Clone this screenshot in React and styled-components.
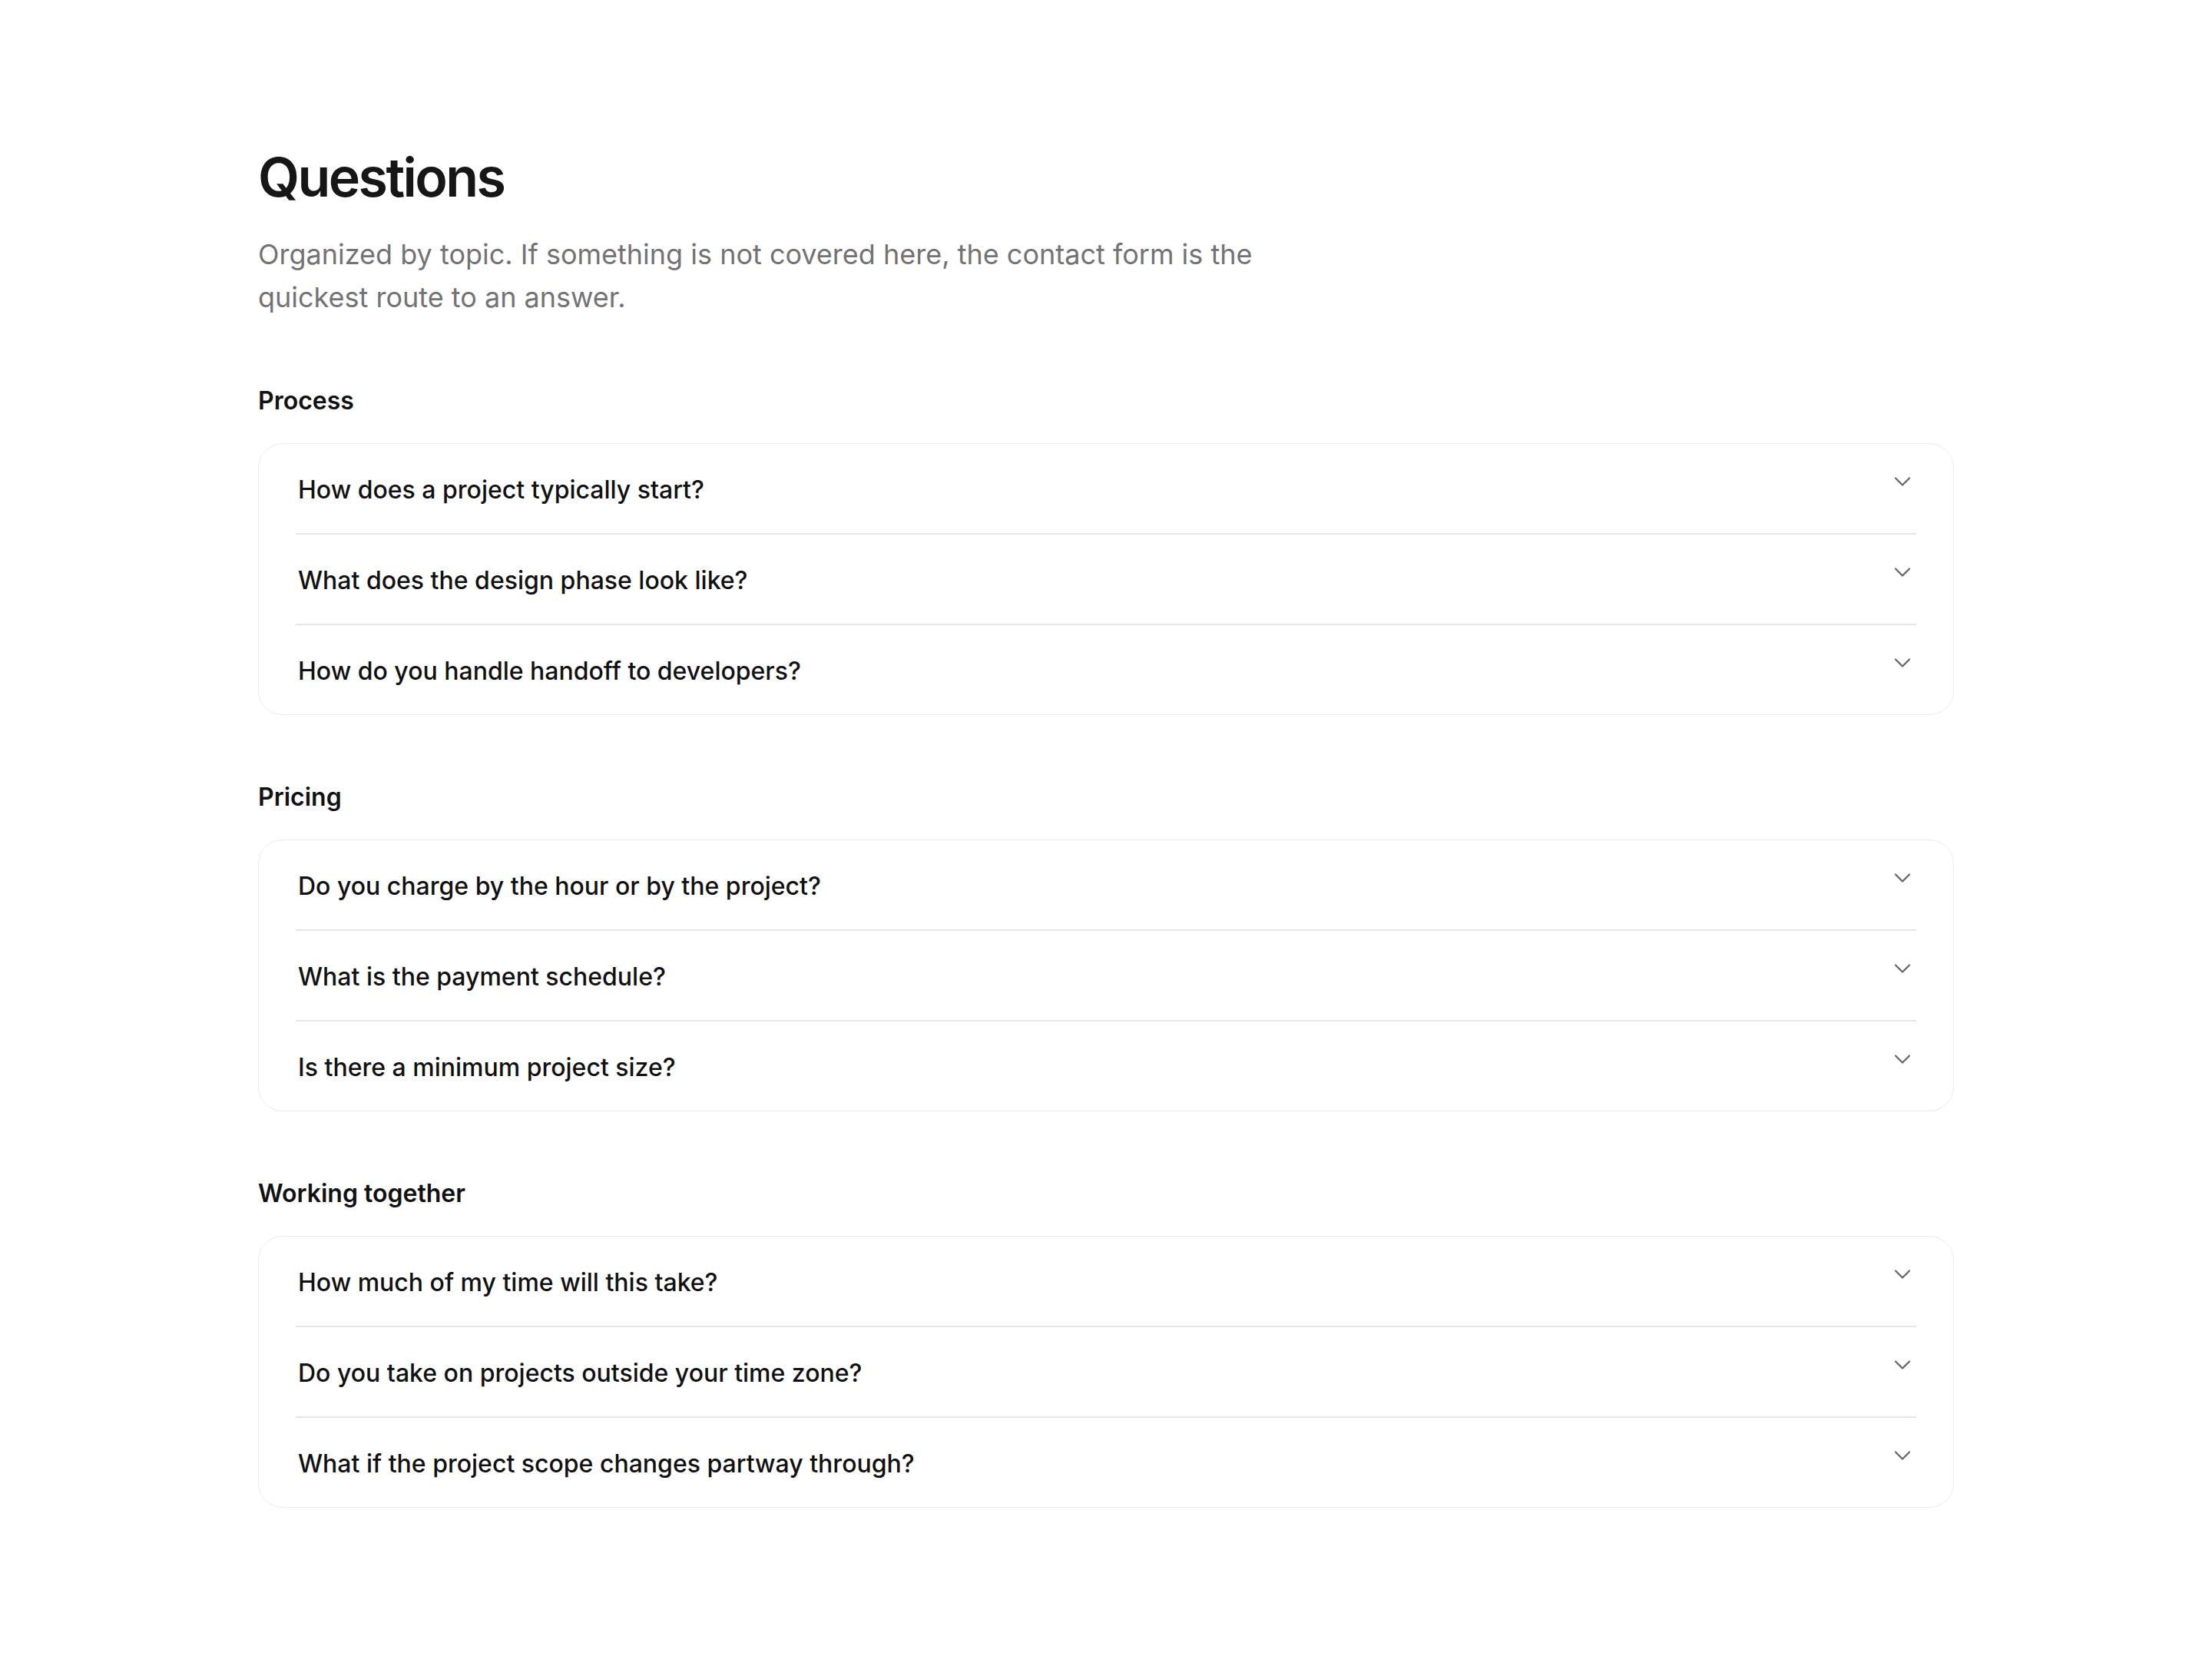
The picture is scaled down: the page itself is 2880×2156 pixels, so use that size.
import { ChevronDown } from "lucide-react"
import styled, { createGlobalStyle } from "styled-components"

const GlobalStyle = createGlobalStyle`
  html, body {
    margin: 0;
    padding: 0;
    background: #ffffff;
  }
  body {
    font-family: Inter, "Noto Sans", "Liberation Sans", sans-serif;
    color: #111111;
    -webkit-font-smoothing: antialiased;
  }
`

const Page = styled.main`
  max-width: 2208px;
  margin: 0 auto;
  padding: 191px 0 160px;
`

const Header = styled.header`
  display: flex;
  flex-direction: column;
  gap: 33px;
  margin-bottom: 81px;
`

const Title = styled.h1`
  margin: 0;
  font-size: 70px;
  line-height: 79px;
  font-weight: 600;
  letter-spacing: -0.037em;
  color: #161616;
`

const Subtitle = styled.p`
  margin: 0;
  max-width: 1420px;
  font-size: 36px;
  line-height: 56px;
  color: #737373;
`

const Sections = styled.div`
  display: flex;
  flex-direction: column;
  gap: 81px;
`

const Section = styled.section`
  display: flex;
  flex-direction: column;
  gap: 31px;
`

const SectionLabel = styled.h2`
  margin: 2px 0 0;
  font-size: 32px;
  line-height: 48px;
  font-weight: 600;
  color: #111111;
`

const Card = styled.div`
  border: 1px solid #ececec;
  border-radius: 32px;
  padding: 0 48px;
  background: #ffffff;
`

const Row = styled.button`
  display: flex;
  align-items: flex-start;
  justify-content: space-between;
  width: 100%;
  padding: 34px 0;
  background: none;
  border: none;
  border-top: ${p => (p.$first ? "none" : "2px solid #e6e6e6")};
  font-family: inherit;
  text-align: left;
  cursor: pointer;
`

const Question = styled.span`
  padding: 2px 0 0 3px;
  margin-bottom: -2px;
  font-size: 32px;
  line-height: 48px;
  font-weight: 500;
  color: #111111;
`

const Chevron = styled(ChevronDown)`
  flex-shrink: 0;
  margin-top: -3px;
  color: #666666;
`

const sections = [
  {
    title: "Process",
    questions: [
      "How does a project typically start?",
      "What does the design phase look like?",
      "How do you handle handoff to developers?",
    ],
  },
  {
    title: "Pricing",
    questions: [
      "Do you charge by the hour or by the project?",
      "What is the payment schedule?",
      "Is there a minimum project size?",
    ],
  },
  {
    title: "Working together",
    questions: [
      "How much of my time will this take?",
      "Do you take on projects outside your time zone?",
      "What if the project scope changes partway through?",
    ],
  },
]

const App = () => {
  return (
    <>
      <GlobalStyle />
      <Page>
        <Header>
          <Title>Questions</Title>
          <Subtitle>
            Organized by topic. If something is not covered here, the contact form is the quickest route
            to an answer.
          </Subtitle>
        </Header>
        <Sections>
          {sections.map(section => (
            <Section key={section.title}>
              <SectionLabel>{section.title}</SectionLabel>
              <Card>
                {section.questions.map((q, i) => (
                  <Row key={q} $first={i === 0}>
                    <Question>{q}</Question>
                    <Chevron size={36} strokeWidth={1.5} />
                  </Row>
                ))}
              </Card>
            </Section>
          ))}
        </Sections>
      </Page>
    </>
  )
}

export default App
